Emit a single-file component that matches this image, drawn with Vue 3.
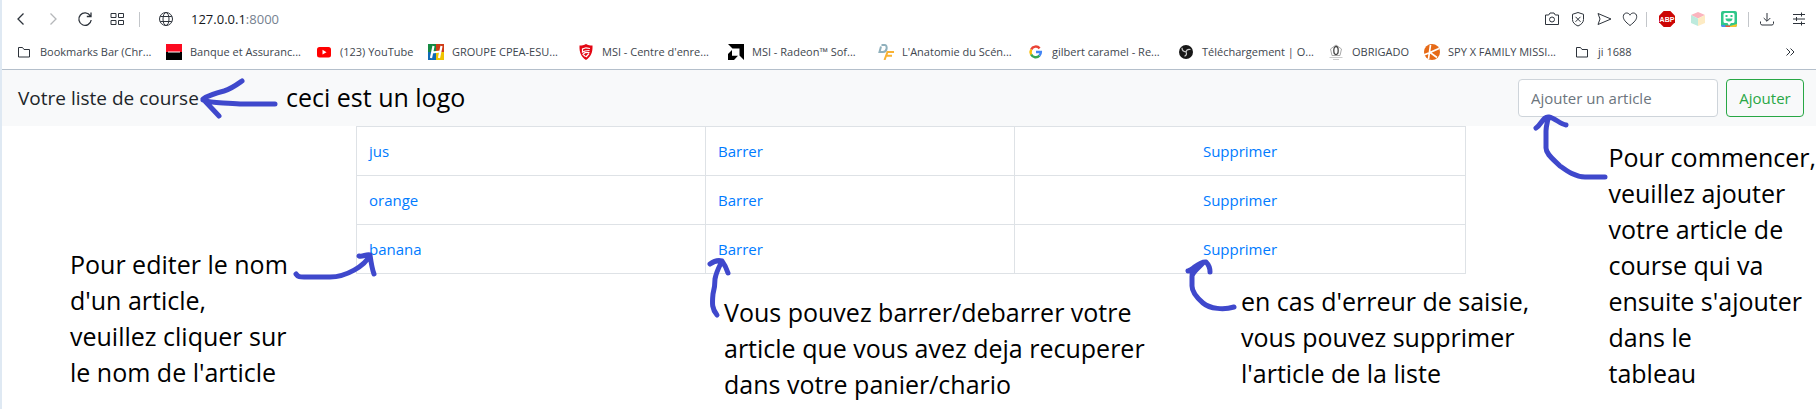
<script setup>
import { ref } from 'vue'

const articles = ref(['jus', 'orange', 'banana'])
const nouvelArticle = ref('')

const bookmarks = [
  { icon: 'folder', label: 'Bookmarks Bar (Chr...' },
  { icon: 'bank', label: 'Banque et Assuranc...' },
  { icon: 'youtube', label: '(123) YouTube' },
  { icon: 'groupe', label: 'GROUPE CPEA-ESU...' },
  { icon: 'msi', label: 'MSI - Centre d\'enre...' },
  { icon: 'amd', label: 'MSI - Radeon™ Sof...' },
  { icon: 'df', label: 'L\'Anatomie du Scén...' },
  { icon: 'google', label: 'gilbert caramel - Re...' },
  { icon: 'obs', label: 'Téléchargement | O...' },
  { icon: 'obrigado', label: 'OBRIGADO' },
  { icon: 'spy', label: 'SPY X FAMILY MISSI...' },
  { icon: 'folder', label: 'ji 1688' },
]

function ajouter() {
  const nom = nouvelArticle.value.trim()
  if (nom) articles.value.push(nom)
  nouvelArticle.value = ''
}
</script>

<template>
  <div class="page">
    <header class="browser">
      <div class="toolbar">
        <button class="tool" type="button" aria-label="Back">
          <svg class="line" viewBox="0 0 16 16"><path d="M10.5 2.5 5 8l5.5 5.5" /></svg>
        </button>
        <button class="tool faded" type="button" aria-label="Forward">
          <svg class="line" viewBox="0 0 16 16"><path d="M5.5 2.500 11 8l-5.5 5.5" /></svg>
        </button>
        <button class="tool" type="button" aria-label="Reload">
          <svg class="line" viewBox="0 0 16 16"><path d="M13.3 4.800A6.200 6.200 0 1 0 14.200 9M14 1.500v4H9.800" /></svg>
        </button>
        <button class="tool" type="button" aria-label="Speed dial">
          <svg class="thin" viewBox="0 0 16 16"><path d="M2 2.500h5v4H2zM9.500 2.500h5v4h-5zM2 9.500h5v4H2zM9.500 9.500h5v4h-5z" /></svg>
        </button>
        <span class="sep sep-address"></span>
        <span class="tool">
          <svg class="thin" viewBox="0 0 16 16"><circle cx="8" cy="8" r="6.500" /><ellipse cx="8" cy="8" rx="3" ry="6.500" /><path d="M2.200 5.500h11.600M2.200 10.500h11.600" /></svg>
        </span>
        <span class="address">127.0.0.1<span class="port">:8000</span></span>

        <div class="actions">
          <button class="tool narrow" type="button" aria-label="Snapshot">
            <svg class="thin" viewBox="0 0 16 16"><path d="M1.500 4h3.200l1.300-2h4l1.300 2h3.200v9.500h-13z" /><circle cx="8" cy="8.500" r="2.500" /></svg>
          </button>
          <button class="tool narrow" type="button" aria-label="Ad blocker">
            <svg class="thin" viewBox="0 0 16 16"><path d="M8 1.500 13.500 3.300v5.200c0 3-2.200 5-5.500 6.500-3.300-1.500-5.500-3.500-5.500-6.500V3.300zM5.500 5.800l5 5M10.500 5.800l-5 5" /></svg>
          </button>
          <button class="tool narrow" type="button" aria-label="Send">
            <svg class="thin" viewBox="0 0 16 16"><path d="M2 2.500 15 8 2 13.500 4 8z" /></svg>
          </button>
          <button class="tool narrow" type="button" aria-label="Favourite">
            <svg class="thin" viewBox="0 0 16 16"><path d="M8 14.500C3.500 11 1.300 8.500 1.300 5.600 1.300 3.400 2.800 2 4.600 2 6.200 2 7.400 2.900 8 4.200 8.600 2.900 9.800 2 11.400 2c1.800 0 3.300 1.400 3.300 3.600 0 2.900-2.200 5.400-6.700 8.900z" /></svg>
          </button>
          <span class="sep sep-ext"></span>
          <button class="tool medium" type="button" aria-label="Adblock Plus">
            <svg viewBox="0 0 16 16"><path fill="#cc0605" d="M4.700 0h6.600L16 4.700v6.600L11.300 16H4.700L0 11.300V4.700z" /><text class="abp" x="8" y="10.500">ABP</text></svg>
          </button>
          <button class="tool medium" type="button" aria-label="Cube">
            <svg viewBox="0 0 16 16"><path fill="#fbb4be" d="m8 1 7 3-7 3.500L1 4z" /><path fill="#bdeadd" d="m1 4 7 3.500V15l-7-3z" /><path fill="#fdebc4" d="M15 4 8 7.500V15l7-3z" /></svg>
          </button>
          <button class="tool medium" type="button" aria-label="Bitmoji">
            <svg viewBox="0 0 16 16"><rect width="16" height="16" rx="2" fill="#30c78a" /><path fill="#4a8df0" d="M0 14h4l1 2H2a2 2 0 0 1-2-2z" /><path fill="#f5503c" d="M4 14.500h5V16H5z" /><path fill="#fac52b" d="M9 15l7-2v1a2 2 0 0 1-2 2H9z" /><path fill="#fff" d="M4 2h8a1.500 1.500 0 0 1 1.500 1.500v7A1.500 1.500 0 0 1 12 12h-2l-2 2.500L6.500 12H4a1.500 1.500 0 0 1-1.500-1.500v-7A1.500 1.500 0 0 1 4 2z" /><path fill="#30c78a" d="M4.500 4h2v2h-2zM9.500 4h2v2h-2zM4.500 7.500h7c0 2-1.500 3-3.500 3s-3.500-1-3.500-3z" /></svg>
          </button>
          <span class="sep sep-menu"></span>
          <button class="tool" type="button" aria-label="Downloads">
            <svg class="thin" viewBox="0 0 16 16"><path d="M8 2v8M4.700 7 8 10.300 11.300 7M1.500 10.500v2l1 1.500h11l1-1.500v-2" /></svg>
          </button>
          <button class="tool" type="button" aria-label="Easy setup">
            <svg class="thin" viewBox="0 0 16 16"><path d="M2 3.500h12M2 8h12M2 12.500h12M10.500 1.500v4M5.500 6v4M10.500 10.500v4" /></svg>
          </button>
        </div>
      </div>

      <nav class="bookmarks" aria-label="Bookmarks">
        <a v-for="b in bookmarks" :key="b.label" class="bookmark" href="#">
          <svg v-if="b.icon === 'folder'" class="thin" viewBox="0 0 16 16"><path d="M2.500 3.500h4l1.500 2h5.500v7.500h-11z" /></svg>
          <svg v-else-if="b.icon === 'bank'" viewBox="0 0 16 16"><path fill="#fc0a20" d="M0 0h16v8H0z" /><path d="M0 8h16v8H0z" /><path fill="#fff" d="M2 7.500h12v1H2z" /></svg>
          <svg v-else-if="b.icon === 'youtube'" viewBox="0 0 16 16"><rect x="1" y="3" width="14" height="10.500" rx="2.500" fill="#f00" /><path fill="#fff" d="m6.500 5.800 4 2.400-4 2.400z" /></svg>
          <svg v-else-if="b.icon === 'groupe'" viewBox="0 0 16 16"><path fill="#168a43" d="M0 0h8v8H0z" /><path fill="#cf3b17" d="M8 0h8v8H8z" /><path fill="#0f69b4" d="M0 8h8v8H0z" /><path fill="#efc400" d="M8 8h8v8H8z" /><path stroke="#fff" stroke-width="2.200" fill="none" d="M5.500 2 3 14M13.500 2 11 14M4 8.500l8.500-1" /></svg>
          <svg v-else-if="b.icon === 'msi'" viewBox="0 0 16 16"><path fill="#e30613" d="M8 0c2 1 4 1.500 6.500 1.500.3 7-1.500 11-6.500 14.500C3 12.500 1.200 8.500 1.500 1.500 4 1.500 6 1 8 0z" /><path fill="none" stroke="#fff" stroke-width="1.200" d="M12 4.500 8 3.800 4.500 5v3l2.500-1 4.500-.5M11.500 8.500 7 8.700l-2 1.500 2.500 2.500M8 13l3-3.500" /></svg>
          <svg v-else-if="b.icon === 'amd'" viewBox="0 0 16 16"><path d="M0 0h16v16l-4.500-4.500v-7h-7zM4 6v5.800h6L6 16H0v-6z" /></svg>
          <svg v-else-if="b.icon === 'df'" viewBox="0 0 16 16"><path fill="none" stroke="#8fb0bc" stroke-width="2" d="M3.500 1H7c2.500 0 2.500 7-2 7H1.500L3 2.500" /><path fill="none" stroke="#f9b233" stroke-width="2" d="M16 8H9.500L6.500 16M8 11.800h6" /></svg>
          <svg v-else-if="b.icon === 'google'" viewBox="0 0 16 16"><g fill="none" stroke-width="2.500"><path stroke="#ea4335" d="M3.200 5.500A5 5 0 0 1 11.600 4.400" /><path stroke="#fbbc05" d="M3.200 5.500a5 5 0 0 0 0 5" /><path stroke="#34a853" d="M3.200 10.500a5 5 0 0 0 8.200 1.200" /><path stroke="#4285f4" d="M11.400 11.700A5 5 0 0 0 12.800 8.100H8" /></g></svg>
          <svg v-else-if="b.icon === 'obs'" viewBox="0 0 16 16"><circle cx="8" cy="8" r="7" fill="#171717" /><path fill="none" stroke="#c9c9c9" stroke-width="1.200" d="M4 3.800c0 2.500 1.200 4 4 4M12.500 5.500c-2.200-.5-4 .3-4.500 2.300M8 7.800c1 2 .5 3.700-1.500 4.500" /></svg>
          <svg v-else-if="b.icon === 'obrigado'" viewBox="0 0 16 16"><path fill="none" stroke="#aaa" d="M8 1 13.500 5 12 11.500H4L2.500 5z" /><ellipse cx="8" cy="6.500" rx="2.200" ry="4" fill="#fff" stroke="#444" stroke-width="1.300" /><path stroke="#ccc" d="M1.500 13.500h13M5 15.500h6" /></svg>
          <svg v-else viewBox="0 0 16 16"><circle cx="8" cy="8" r="8" fill="#e66a17" /><path fill="none" stroke="#fff" stroke-width="1.700" d="M6.500 1 4.500 15M15 4.500 6 8.500l7 5M0 11l6-2.500" /></svg>
          <span>{{ b.label }}</span>
        </a>
        <button class="more" type="button" aria-label="More bookmarks">
          <svg class="thin" viewBox="0 0 16 16"><path d="m4.500 4.500 3.500 3.500-3.500 3.500M8.500 4.500 12 8l-3.500 3.500" /></svg>
        </button>
      </nav>
    </header>

    <nav class="navbar">
      <a class="brand" href="#">Votre liste de course</a>
      <form class="add" @submit.prevent="ajouter">
        <input v-model="nouvelArticle" type="text" placeholder="Ajouter un article" aria-label="Ajouter un article" />
        <button type="submit">Ajouter</button>
      </form>
    </nav>

    <main class="content">
      <table>
        <tbody>
          <tr v-for="article in articles" :key="article">
            <td class="name"><a href="#">{{ article }}</a></td>
            <td class="strike"><a href="#">Barrer</a></td>
            <td class="remove"><a href="#">Supprimer</a></td>
          </tr>
        </tbody>
      </table>
    </main>

    <!-- Hand-drawn notes laid over the page -->
    <svg class="arrow arrow-logo" viewBox="196 74 88 48" width="88" height="48"><path d="M242 81C235 86 231 89 224 91C216 93 209 95 203 99L219 116M203 100C212 104 224 102 240 104H275" /></svg>
    <p class="note note-logo">ceci est un logo</p>

    <svg class="arrow arrow-edit" viewBox="290 248 90 36" width="90" height="36"><path d="M296 274C298 277 300 277 304 277H330C346 277 365 266 370 255M359 256C363 257 366 254 370 255C371 262 372 269 374 274" /></svg>
    <p class="note note-edit">Pour editer le nom<br />d'un article,<br />veuillez cliquer sur<br />le nom de l'article</p>

    <svg class="arrow arrow-strike" viewBox="704 254 32 68" width="32" height="68"><path d="M717 315C712 309 712 304 713 294C715 287 715 284 715 279C716 273 718 269 721 263M710 264C714 261 718 260 722 261C725 265 727 270 728 273" /></svg>
    <p class="note note-strike">Vous pouvez barrer/debarrer votre<br />article que vous avez deja recuperer<br />dans votre panier/chario</p>

    <svg class="arrow arrow-remove" viewBox="1182 254 58 62" width="58" height="62"><path d="M1234 307C1224 310 1210 309 1203 303C1196 297 1192 292 1192 286V276C1193 272 1199 267 1203 263M1188 271C1193 270 1199 261 1206 262C1209 265 1210 268 1210 272M1192 274 1202 264" /></svg>
    <p class="note note-remove">en cas d'erreur de saisie,<br />vous pouvez supprimer<br />l'article de la liste</p>

    <svg class="arrow arrow-add" viewBox="1530 110 82 76" width="82" height="76"><path d="M1605 177H1585C1575 177 1567 171 1560 166C1553 159 1546 154 1546 148V131C1546 125 1548 121 1548 118M1536 128C1542 124 1543 116 1549 117C1555 118 1560 124 1566 125" /></svg>
    <p class="note note-add">Pour commencer,<br />veuillez ajouter<br />votre article de<br />course qui va<br />ensuite s'ajouter<br />dans le<br />tableau</p>
  </div>
</template>

<style>
body {
  margin: 0;
  background: #fff;
}
</style>

<style scoped>
.page {
  position: relative;
  box-sizing: border-box;
  min-height: 100vh;
  overflow: hidden;
  border-left: 2px solid #dfe9f3;
  font-family: "Open Sans", "Noto Sans", sans-serif;
  font-size: 15px;
  line-height: 24px;
  color: #212529;
}

a {
  color: #007bff;
  text-decoration: none;
}

button {
  padding: 0;
  border: 0;
  background: none;
  font: inherit;
  cursor: pointer;
}

.browser {
  border-bottom: 1px solid #b4bfcb;
  background: #fff;
}

.browser svg {
  display: block;
  flex: none;
  width: 16px;
  height: 16px;
}

.line,
.thin {
  fill: none;
  stroke: #2d333b;
  stroke-width: 1;
}

.line {
  stroke-width: 1.3;
}

.toolbar {
  display: flex;
  align-items: center;
  height: 38px;
  padding: 0 1px 0 3px;
}

.tool {
  display: flex;
  flex: none;
  align-items: center;
  justify-content: center;
  width: 32px;
  height: 32px;
}

.narrow {
  width: 26px;
}

.medium {
  width: 31px;
}

.faded {
  opacity: 0.35;
}

.sep {
  width: 1px;
  height: 15px;
  background: #c3c6ca;
}

.sep-address {
  margin: 0 10px 0 6px;
}

.sep-ext {
  margin: 0 4px 0 3px;
}

.sep-menu {
  margin: 0 2px 0 4px;
}

.address {
  margin-left: 9px;
  font-size: 13px;
  color: #16191d;
}

.port {
  color: #75818f;
}

.actions {
  display: flex;
  align-items: center;
  margin-left: auto;
}

.abp {
  fill: #fff;
  font-family: "Liberation Sans", sans-serif;
  font-size: 7px;
  font-weight: 700;
  text-anchor: middle;
}

.bookmarks {
  display: grid;
  grid-template-columns: 150px 150px 112px repeat(6, 150px) 96px 150px 1fr auto;
  align-items: center;
  height: 28px;
  padding: 0 18px 3px 14px;
}

.bookmark {
  display: flex;
  align-items: center;
  gap: 8px;
  font-size: 11px;
  line-height: 16px;
  color: #40464e;
  white-space: nowrap;
}

.navbar {
  display: flex;
  align-items: center;
  justify-content: space-between;
  padding: 9px 12px 9px 16px;
  background: #f8f9fa;
}

.brand {
  font-size: 19px;
  color: #212529;
}

.add {
  display: flex;
  gap: 8px;
}

.add input {
  box-sizing: border-box;
  width: 200px;
  height: 38px;
  padding: 6px 12px;
  border: 1px solid #ced4da;
  border-radius: 4px;
  background: #fff;
  font: inherit;
  color: #495057;
}

.add input::placeholder {
  color: #6c757d;
  opacity: 1;
}

.add button {
  min-width: 78px;
  height: 38px;
  padding: 0 12px;
  border: 1px solid #28a745;
  border-radius: 4px;
  color: #28a745;
}

.content {
  max-width: 1110px;
  margin: 0 auto;
  padding-left: 4px;
}

table {
  width: 100%;
  table-layout: fixed;
  border-collapse: collapse;
}

td {
  padding: 12px;
  border: 1px solid #dee2e6;
}

.name {
  width: 324px;
}

.strike {
  width: 284px;
}

.remove {
  text-align: center;
}

.arrow {
  position: absolute;
  fill: none;
  stroke: #3f48cc;
  stroke-width: 5;
  stroke-linecap: round;
  stroke-linejoin: round;
  pointer-events: none;
}

.note {
  position: absolute;
  margin: 0;
  font-size: 25px;
  line-height: 36px;
  color: #000;
  white-space: nowrap;
  pointer-events: none;
}

.arrow-logo {
  left: 194px;
  top: 74px;
}

.note-logo {
  left: 284px;
  top: 79px;
}

.arrow-edit {
  left: 288px;
  top: 248px;
}

.note-edit {
  left: 68px;
  top: 246px;
}

.arrow-strike {
  left: calc(50% - 205px);
  top: 254px;
}

.note-strike {
  left: calc(50% - 185px);
  top: 294px;
}

.arrow-remove {
  left: calc(50% + 273px);
  top: 254px;
}

.note-remove {
  left: calc(50% + 332px);
  top: 283px;
}

.arrow-add {
  right: 204px;
  top: 110px;
}

.note-add {
  right: 0;
  top: 139px;
}
</style>
